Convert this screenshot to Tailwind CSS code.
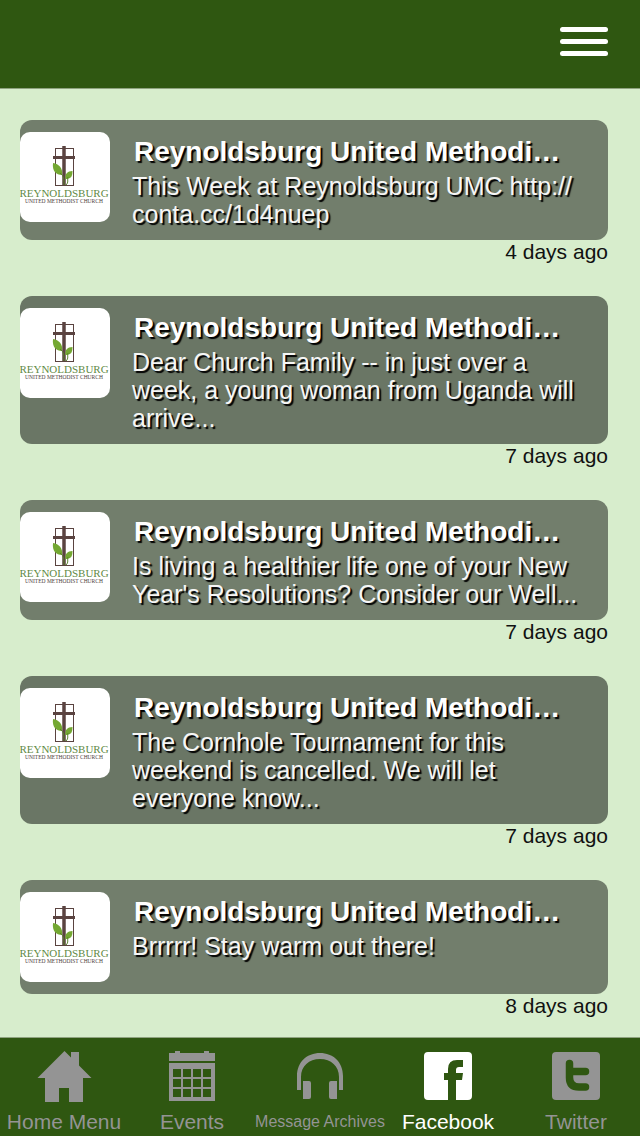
<!DOCTYPE html>
<html lang="en">
  <head>
    <meta charset="UTF-8" />
    <meta name="viewport" content="width=device-width, initial-scale=1.0" />
    <title>Reynoldsburg UMC - Facebook</title>
    <script src="https://cdn.jsdelivr.net/npm/@tailwindcss/browser@4"></script>
  </head>
  <body
    class="flex flex-col h-screen bg-[#d7edcc] font-['Liberation_Sans',Arial,sans-serif]"
  >
    <header
      class="flex items-center justify-end h-[89px] shrink-0 px-8 pb-1.5 bg-[#2f5711] border-b border-[#8fa380]"
    >
      <button
        type="button"
        aria-label="Menu"
        class="flex flex-col gap-[7px] w-12"
      >
        <span class="h-[5px] w-full rounded-sm bg-white"></span>
        <span class="h-[5px] w-full rounded-sm bg-white"></span>
        <span class="h-[5px] w-full rounded-sm bg-white"></span>
      </button>
    </header>

    <main
      id="feed"
      class="flex-1 min-h-0 overflow-y-auto flex flex-col gap-8 pt-[31px] pl-5 pr-8"
    ></main>

    <nav
      class="grid grid-cols-5 shrink-0 h-[99px] bg-[#2f5711] border-t border-[#8fa380] text-[21px] leading-6 text-[#949494]"
    >
      <a href="#" class="flex flex-col items-center gap-[5px] pt-[11px] whitespace-nowrap">
        <svg class="w-14 h-14" viewBox="0 0 56 56" fill="currentColor">
          <path d="M28.5 2L35 8.500V3h8v13.500L55.500 29H47v24H33V39H23v14H9V29H1.500z" />
        </svg>
        Home Menu
      </a>
      <a href="#" class="flex flex-col items-center gap-[5px] pt-[11px] whitespace-nowrap">
        <svg class="w-14 h-14" viewBox="0 0 56 56" fill="currentColor">
          <path d="M5 4h6V2h5v2h24V2h5v2h6v8H5z" />
          <path
            fill-rule="evenodd"
            d="M5 14h46v38H5zM9 20v8h8v-8zM19 20v8h8v-8zM29 20v8h8v-8zM39 20v8h8v-8zM9 30v8h8v-8zM19 30v8h8v-8zM29 30v8h8v-8zM39 30v8h8v-8zM9 40v8h8v-8zM19 40v8h8v-8zM29 40v8h8v-8zM39 40v8h8v-8z"
          />
        </svg>
        Events
      </a>
      <a href="#" class="flex flex-col items-center gap-[5px] pt-[11px] whitespace-nowrap">
        <svg class="w-14 h-14" viewBox="0 0 56 56" fill="currentColor">
          <path
            d="M5 41V27C5 13 15 4 28 4s23 9 23 23v14h-4V28C47 17 39 10 28 10S9 17 9 28v13z"
          />
          <path d="M11 32h6q2 0 2 2v14q0 2-2 2h-6zM45 32h-6q-2 0-2 2v14q0 2 2 2h6z" />
        </svg>
        <span class="text-base leading-6">Message Archives</span>
      </a>
      <a
        href="#"
        aria-current="page"
        class="flex flex-col items-center gap-[5px] pt-[11px] whitespace-nowrap text-white"
      >
        <svg class="w-14 h-14" viewBox="0 0 56 56" fill="currentColor">
          <path
            d="M8 3h40q4 0 4 4v40q0 4-4 4H36V31h6l1-7h-7v-3q0-3 3-3h4v-7h-6q-9 0-9 9v4h-4v7h4v20H8q-4 0-4-4V7q0-4 4-4z"
          />
        </svg>
        Facebook
      </a>
      <a href="#" class="flex flex-col items-center gap-[5px] pt-[11px] whitespace-nowrap">
        <svg class="w-14 h-14" viewBox="0 0 56 56">
          <rect x="4" y="3" width="48" height="48" rx="4" fill="currentColor" />
          <path
            d="M21.500 14.500v14q0 9.500 9.500 9.500h6.500M22 22.500h15.500"
            fill="none"
            stroke="#2f5711"
            stroke-width="7.500"
            stroke-linecap="round"
          />
        </svg>
        Twitter
      </a>
    </nav>

    <template id="post">
      <article>
        <div class="card flex items-start gap-[22px] rounded-xl bg-[#727e6c] py-3">
          <svg class="w-[90px] h-[90px] shrink-0 rounded-[10px] bg-white" viewBox="0 0 90 90">
            <g fill="none" stroke="#5a4340">
              <path d="M35.500 16v38M53.500 16v38M35 16.500h19M35 53.500h19" />
              <path d="M44 14v40" stroke-width="3.500" />
              <path d="M33 25.500h22" stroke-width="3" />
            </g>
            <g fill="#74a832">
              <path d="M33 31c6 1 10 5 9 12c-6 0-10-4-9-12z" />
              <path d="M52.500 39c0 6-2 8-7 8c-1-5 2-8 7-8z" />
            </g>
            <path d="M40 41c4 3 4 6 4 12M48 45c-1 3 1 5-2 8" fill="none" stroke="#56802a" />
            <g text-anchor="middle" class="font-['Liberation_Serif',serif]">
              <text x="44" y="65" font-size="11" fill="#5f8a45">REYNOLDSBURG</text>
              <text x="44" y="71" font-size="5.500" fill="#4c3c3a">UNITED METHODIST CHURCH</text>
            </g>
          </svg>
          <div class="flex-1 min-w-0 pt-1 pr-6">
            <h2
              class="pl-0.5 text-[28px] leading-8 font-bold text-white whitespace-nowrap [text-shadow:2px_2px_1px_#000]"
            >
              Reynoldsburg United Methodi…
            </h2>
            <p
              class="mt-1 text-[25px] leading-7 text-[#f6f6f6] [text-shadow:2px_2px_1px_#000]"
            ></p>
          </div>
        </div>
        <time class="block text-right text-[21px] leading-6 text-[#111]"></time>
      </article>
    </template>

    <script>
      const posts = [
        { text: "This Week at Reynoldsburg UMC http://<wbr>conta.cc/1d4nuep", time: "4 days ago" },
        { text: "Dear Church Family -- in just over a week, a young woman from Uganda will arrive...", time: "7 days ago", dark: true },
        { text: "Is living a healthier life one of your New Year's Resolutions? Consider our Well...", time: "7 days ago" },
        { text: "The Cornhole Tournament for this weekend is cancelled. We will let everyone know...", time: "7 days ago", dark: true },
        { text: "Brrrrr! Stay warm out there!", time: "8 days ago" },
      ];

      const feed = document.getElementById("feed");
      const template = document.getElementById("post");

      posts.forEach((post) => {
        const item = template.content.cloneNode(true);
        item.querySelector("p").innerHTML = post.text;
        item.querySelector("time").textContent = post.time;
        if (post.dark) {
          item.querySelector(".card").classList.replace("bg-[#727e6c]", "bg-[#6a7665]");
        }
        feed.appendChild(item);
      });
    </script>
  </body>
</html>
